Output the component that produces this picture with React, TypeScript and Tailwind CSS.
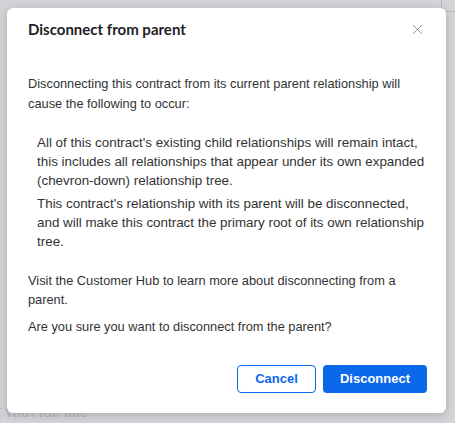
import { X } from 'lucide-react';

const body = "font-['Liberation_Sans',Arial,sans-serif]";

export default function App() {
  return (
    <div className="relative h-[423px] w-[455px] overflow-hidden bg-[#d3d3d8]">
      <div className={`absolute left-[-3px] top-[404px] text-[16px] leading-[16px] text-[#b8b8be] ${body}`}>t with full title</div>
      <div className="absolute right-[-6px] top-[-4px] h-[16px] w-[20px] rounded-[3px] border border-[#babac0]" />
      <div className="relative pl-[7px] pt-[8px]">
        <div className="flex h-[405px] w-[439px] flex-col rounded-[6px] bg-white px-[21px] pb-[20px] shadow-[0_2px_10px_rgba(0,0,0,0.18)]">
          <div className="flex items-center justify-between pt-[11px]">
            <h2 className="font-['Lato',sans-serif] text-[15px] font-bold leading-[20px] text-[#1e1e24]">
              Disconnect from parent
            </h2>
            <X className="-mr-[1px] h-[17px] w-[17px] text-[#8d8d95]" strokeWidth={1.3} />
          </div>

          <div className={`mt-[35px] text-[#333333] ${body}`}>
            <p className="text-[12.8px] leading-[20px]">
              Disconnecting this contract from its current parent relationship will cause the following to occur:
            </p>
            <div className="mt-[18.5px] pl-[9px] text-[13.4px] leading-[19px]">
              <p>
                All of this contract's existing child relationships will remain intact, this includes all relationships that appear under its own expanded (chevron-down) relationship tree.
              </p>
              <p className="mt-[4px]">
                This contract's relationship with its parent will be disconnected, and will make this contract the primary root of its own relationship tree.
              </p>
            </div>
            <p className="mt-[20px] text-[12.8px] leading-[19px]">
              Visit the Customer Hub to learn more about disconnecting from a parent.
            </p>
            <p className="mt-[8px] text-[12.8px] leading-[19px]">Are you sure you want to disconnect from the parent?</p>
          </div>

          <div className={`mt-auto flex justify-end gap-[7px] ${body}`}>
            <button className="h-[28px] w-[79px] rounded-[4px] border border-[#0b68ea] bg-white text-[13px] font-bold text-[#0b68ea]">
              Cancel
            </button>
            <button className="-mr-[2px] h-[28px] w-[104px] rounded-[4px] bg-[#0b68ea] text-[13px] font-bold text-white">
              Disconnect
            </button>
          </div>
        </div>
      </div>
    </div>
  );
}
